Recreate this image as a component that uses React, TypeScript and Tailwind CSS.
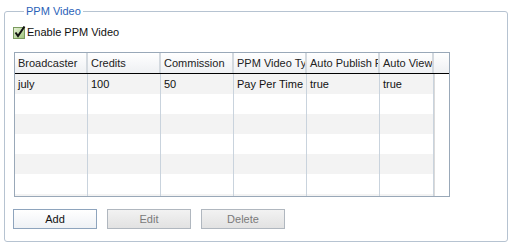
import React from "react";

const columns = ["Broadcaster", "Credits", "Commission", "PPM Video Type", "Auto Publish Flag", "Auto View"];
const rows = [["july", "100", "50", "Pay Per Time", "true", "true"]];
const widths = ["w-[73px]", "w-[73px]", "w-[73px]", "w-[73px]", "w-[73px]", "w-[54px]"];

function CheckIcon() {
  return (
    <svg width="13" height="13" viewBox="0 0 13 13" className="shrink-0">
      <defs>
        <linearGradient id="cb" x1="0" y1="0" x2="1" y2="1">
          <stop offset="0" stopColor="#e8f3d8" />
          <stop offset="1" stopColor="#9cc27a" />
        </linearGradient>
      </defs>
      <rect x="0.5" y="1.5" width="11" height="11" fill="url(#cb)" stroke="#7a9a5e" />
      <path d="M2.5 6.5 L5 10 L11.5 0.5" fill="none" stroke="#111" strokeWidth="2" />
    </svg>
  );
}

export default function App() {
  const blank = Array.from({ length: 6 });
  return (
    <div className="w-[512px] h-[246px] bg-white pt-[4px] pl-[4px] text-[11px] text-[#111] font-['Liberation_Sans',Arial,sans-serif]">
      <fieldset className="w-[504px] h-[238px] border border-[#b6c3d1] rounded-[3px] pl-[8px]">
        <legend className="ml-[11px] px-[2px] text-[#2b62b8] leading-[14px]">PPM Video</legend>

        <label className="mt-[8px] flex items-center gap-[1px] leading-[13px]">
          <CheckIcon />
          <span>Enable PPM Video</span>
        </label>

        {/* grid */}
        <div className="mt-[13px] ml-[1px] w-[436px] h-[145px] border border-[#99a8b8] overflow-hidden">
          <div className="flex h-[21px] border-b border-black bg-gradient-to-b from-white to-[#eef0f3]">
            {columns.map((c, i) => (
              <div
                key={c}
                className={`${widths[i]} shrink-0 overflow-hidden whitespace-nowrap pl-[3px] leading-[20px] text-[#222] border-r-2 border-[#d3d9df]`}
              >
                {c}
              </div>
            ))}
          </div>
          {[0, 1, 2, 3, 4, 5, 6].map((r) => (
            <div key={r} className={`flex h-[20px] ${r % 2 === 0 ? "bg-[#f3f3f3]" : "bg-white"}`}>
              {(rows[r] ?? blank).map((v, i) => (
                <div
                  key={i}
                  className={`${widths[i]} shrink-0 overflow-hidden whitespace-nowrap pl-[3px] leading-[20px] border-r border-[#c9d3dd]`}
                >
                  {v as string}
                </div>
              ))}
              <div className="w-[1px] bg-[#dadada]" />
              <div className="flex-1 bg-white" />
            </div>
          ))}
        </div>

        <div className="mt-[12px] flex gap-[10px]">
          <button className="w-[84px] h-[20px] border border-[#8ea4bd] bg-gradient-to-b from-white to-[#eef1f5] text-[#111]">
            Add
          </button>
          <button disabled className="w-[84px] h-[20px] border border-[#b0b7bf] bg-gradient-to-b from-[#f2f2f2] to-[#e2e2e2] text-[#7a7a7a]">
            Edit
          </button>
          <button disabled className="w-[84px] h-[20px] border border-[#b0b7bf] bg-gradient-to-b from-[#f2f2f2] to-[#e2e2e2] text-[#7a7a7a]">
            Delete
          </button>
        </div>
      </fieldset>
    </div>
  );
}
